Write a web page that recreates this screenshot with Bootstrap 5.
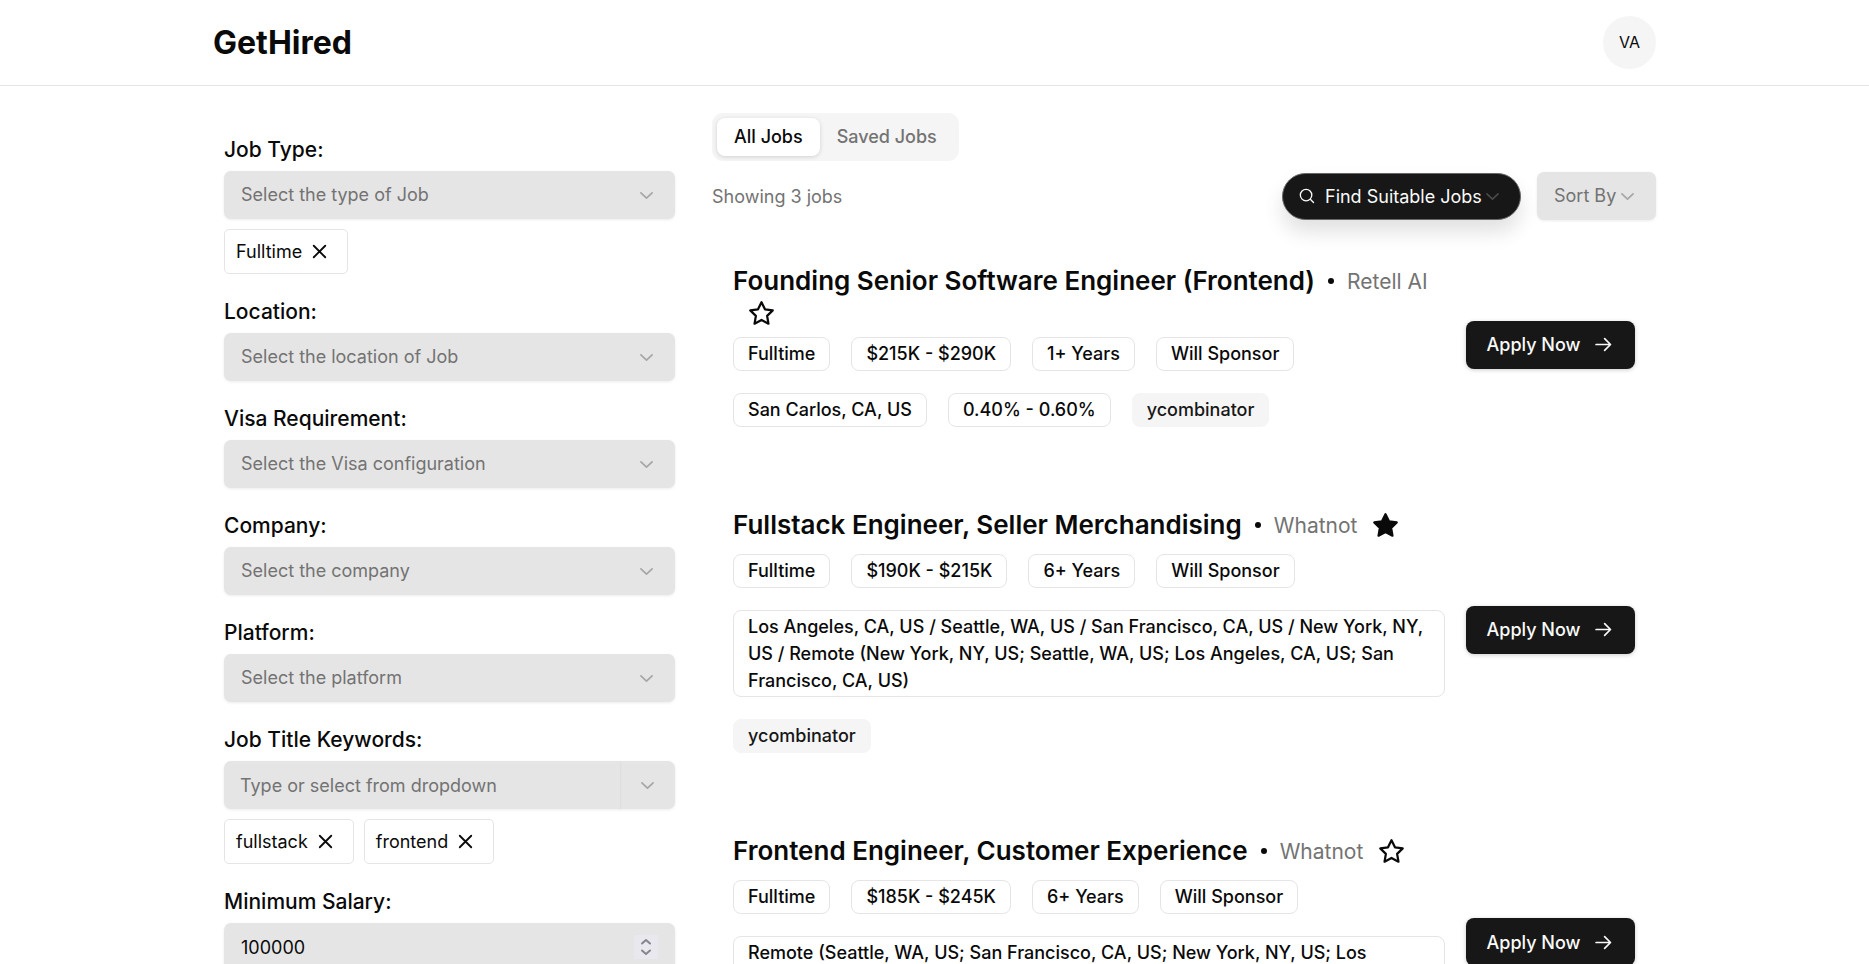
<!DOCTYPE html>
<html lang="en">
<head>
<meta charset="utf-8">
<meta name="viewport" content="width=device-width, initial-scale=1">
<title>GetHired</title>
<link href="https://cdn.jsdelivr.net/npm/bootstrap@5.3.0/dist/css/bootstrap.min.css" rel="stylesheet">
<style>
:root { --ink: #0a0a0a; --primary: #171717; --line: #e5e5e5; --soft: #f5f5f5; --dim: #737373; }
body { font-family: Inter, "Liberation Sans", sans-serif; font-size: 18px; line-height: 27px; color: var(--ink); background: #fff; }
.wrap { max-width: 1443px; }
.site-header { border-bottom: 1px solid var(--line); padding: 16px 0; }
.brand { font-size: 32px; line-height: 40px; font-weight: 700; color: var(--ink); text-decoration: none; }
.avatar { width: 53px; height: 53px; background: var(--soft); font-size: 16px; border: 0; color: var(--ink); }
.filters { flex: 0 0 451px; margin-left: 11px; padding-top: 50px; }
.results { margin-left: 37px; padding-top: 27px; }

/* filter form */
.field { margin-bottom: 24px; }
.field-label { display: block; font-size: 21px; line-height: 28px; font-weight: 500; margin-bottom: 7px; }
.control { height: 48px; border: 0; border-radius: 7px; background-color: var(--line); color: var(--dim); font-size: 18px; line-height: 24px; padding: 12px 17px; box-shadow: 0 1px 3px rgba(0,0,0,.08); }
.pick { background-image: url("data:image/svg+xml,%3Csvg xmlns='http://www.w3.org/2000/svg' viewBox='0 0 15 15'%3E%3Cpath d='M3.500 5.600L7.500 9.400L11.500 5.600' fill='none' stroke='%23a6a6a6' stroke-width='1.200' stroke-linecap='round' stroke-linejoin='round'/%3E%3C/svg%3E"); background-repeat: no-repeat; background-size: 21px 21px; background-position: right 18px center; }
.control:focus { background-color: var(--line); }
.control::placeholder { color: var(--dim); opacity: 1; }
.combo-text { padding-left: 16px; }
.combo-toggle { flex: 0 0 56px; border-left: 1px solid #dedede; background-position: 17px center; }
.salary { color: var(--ink); appearance: textfield; -moz-appearance: textfield; }
.salary::-webkit-inner-spin-button { appearance: none; -webkit-appearance: none; }
.stepper { right: 17px; top: 12px; width: 24px; height: 24px; background: #e8e8ee; border: 0; padding: 0; color: #85858f; }
.chips { gap: 10px; margin-top: 10px; }
.chip { height: 45px; border: 1px solid var(--line); border-radius: 5px; padding: 0 17px 0 11px; gap: 7px; }
.chip button { border: 0; background: none; padding: 0; color: inherit; }

/* tabs and toolbar */
.tabs { background: var(--soft); border-radius: 11px; padding: 5px; height: 48px; }
.tabs button { border: 0; background: none; border-radius: 8px; padding: 0 17px; font-weight: 500; color: var(--dim); height: 38px; line-height: 38px; }
.tabs button.active { background: #fff; color: var(--ink); box-shadow: 0 1px 4px rgba(0,0,0,.15); }
.toolbar { height: 48px; margin-top: 11px; gap: 16px; }
.job-count { color: var(--dim); }
.find { height: 47px; width: 239px; border-radius: 24px; background: var(--primary); color: #fafafa; border: 1px solid #666; padding: 0 15px 0 14px; box-shadow: 0 12px 20px rgba(0,0,0,.12); }
.sort { width: 119px; }

/* job list */
.jobs { padding: 42px 21px 0; }
.job { gap: 21px; margin-bottom: 79px; }
.job-title { font-size: 26px; line-height: 38px; font-weight: 600; margin: 0; }
.dot { width: 6px; height: 6px; border-radius: 50%; background: var(--ink); margin: 0 13px; }
.company { font-size: 21px; color: var(--dim); }
.star { height: 27px; width: 27px; margin-left: 15px; border: 0; padding: 0; background: none; color: var(--ink); }
.tags { gap: 22px 21px; margin-top: 10px; }
.tag { min-height: 34px; border: 1px solid var(--line); border-radius: 8px; padding: 2px 14px; font-weight: 500; font-size: 18px; line-height: 27px; }
.tag-source { background: var(--soft); border-color: var(--soft); color: var(--primary); }
.apply { flex: 0 0 169px; height: 48px; border-radius: 8px; background: var(--primary); color: #fafafa; font-weight: 500; text-decoration: none; gap: 13px; box-shadow: 0 1px 4px rgba(0,0,0,.2); }
svg { display: block; flex: none; }
</style>
</head>
<body>
<svg class="d-none" xmlns="http://www.w3.org/2000/svg">
  <symbol id="cross" viewBox="0 0 15 15"><path d="M3.400 3.400L11.600 11.600M11.600 3.400L3.400 11.600" fill="none" stroke="currentColor" stroke-width="1.300" stroke-linecap="round"/></symbol>
  <symbol id="arrow" viewBox="0 0 15 15"><path d="M2.200 7.500H12.300M8.300 3.300L12.500 7.500L8.300 11.700" fill="none" stroke="currentColor" stroke-width="1.200" stroke-linecap="round" stroke-linejoin="round"/></symbol>
  <symbol id="star" viewBox="0 0 24 24"><path d="M12 2L15.090 8.260L22 9.270L17 14.140L18.180 21.020L12 17.770L5.820 21.020L7 14.140L2 9.270L8.910 8.260Z" stroke="currentColor" stroke-width="2" stroke-linejoin="round"/></symbol>
</svg>

<header class="site-header">
  <div class="wrap mx-auto d-flex align-items-center justify-content-between">
    <a class="brand" href="#">GetHired</a>
    <button type="button" class="avatar rounded-circle">VA</button>
  </div>
</header>

<div class="wrap mx-auto d-flex align-items-start">
  <form class="filters">
    <div class="field">
      <label class="field-label" for="type">Job Type:</label>
      <select id="type" class="form-select control pick"><option>Select the type of Job</option></select>
      <div class="chips d-flex">
        <span class="chip d-inline-flex align-items-center">Fulltime <button type="button" aria-label="Remove Fulltime"><svg width="21" height="21"><use href="#cross"/></svg></button></span>
      </div>
    </div>
    <div class="field">
      <label class="field-label" for="location">Location:</label>
      <select id="location" class="form-select control pick"><option>Select the location of Job</option></select>
    </div>
    <div class="field">
      <label class="field-label" for="visa">Visa Requirement:</label>
      <select id="visa" class="form-select control pick"><option>Select the Visa configuration</option></select>
    </div>
    <div class="field">
      <label class="field-label" for="company">Company:</label>
      <select id="company" class="form-select control pick"><option>Select the company</option></select>
    </div>
    <div class="field">
      <label class="field-label" for="platform">Platform:</label>
      <select id="platform" class="form-select control pick"><option>Select the platform</option></select>
    </div>
    <div class="field">
      <label class="field-label" for="keywords">Job Title Keywords:</label>
      <div class="input-group flex-nowrap">
        <input id="keywords" type="text" class="form-control control combo-text" placeholder="Type or select from dropdown">
        <button type="button" class="control pick combo-toggle" aria-label="Show keywords"></button>
      </div>
      <div class="chips d-flex">
        <span class="chip d-inline-flex align-items-center">fullstack <button type="button" aria-label="Remove fullstack"><svg width="21" height="21"><use href="#cross"/></svg></button></span>
        <span class="chip d-inline-flex align-items-center">frontend <button type="button" aria-label="Remove frontend"><svg width="21" height="21"><use href="#cross"/></svg></button></span>
      </div>
    </div>
    <div class="field">
      <label class="field-label" for="salary">Minimum Salary:</label>
      <div class="position-relative">
        <input id="salary" type="number" class="form-control control salary" value="100000">
        <button type="button" class="stepper position-absolute" aria-label="Change salary"><svg width="24" height="24" viewBox="0 0 24 24" fill="none" stroke="currentColor" stroke-width="2" stroke-linecap="round" stroke-linejoin="round"><path d="M8 8.500L12 5L16 8.500M8 15.500L12 19L16 15.500"/></svg></button>
      </div>
    </div>
  </form>

  <main class="results flex-grow-1">
    <div class="tabs d-inline-flex align-top" role="tablist">
      <button type="button" role="tab" class="active" aria-selected="true">All Jobs</button>
      <button type="button" role="tab" aria-selected="false">Saved Jobs</button>
    </div>
    <div class="toolbar d-flex align-items-center">
      <span class="job-count me-auto text-nowrap">Showing 3 jobs</span>
      <button type="button" class="find d-flex align-items-center text-nowrap">
        <svg width="20" height="20" viewBox="0 0 15 15" fill="none" stroke="currentColor" stroke-width="1" stroke-linecap="round"><circle cx="6.800" cy="6.800" r="4.300"/><path d="M10 10L12.400 12.400"/></svg>
        <span class="ms-2">Find Suitable Jobs</span>
        <svg width="21" height="21" viewBox="0 0 15 15" fill="none" stroke="#4a4a4a" stroke-width="1.100" stroke-linecap="round" stroke-linejoin="round"><path d="M3.500 5.600L7.500 9.400L11.500 5.600"/></svg>
      </button>
      <select class="form-select control pick sort" aria-label="Sort By"><option>Sort By</option></select>
    </div>

    <div class="jobs">
      <article class="job d-flex align-items-center">
        <div class="flex-grow-1">
          <div class="d-flex flex-wrap align-items-center">
            <h2 class="job-title">Founding Senior Software Engineer (Frontend)</h2><span class="dot"></span><span class="company">Retell AI</span>
            <button type="button" class="star" aria-label="Save job"><svg width="27" height="27" fill="none"><use href="#star"/></svg></button>
          </div>
          <div class="tags d-flex flex-wrap">
            <span class="tag">Fulltime</span><span class="tag">$215K - $290K</span><span class="tag">1+ Years</span><span class="tag">Will Sponsor</span>
            <span class="tag">San Carlos, CA, US</span><span class="tag">0.40% - 0.60%</span><span class="tag tag-source">ycombinator</span>
          </div>
        </div>
        <a class="apply d-flex align-items-center justify-content-center" href="#">Apply Now <svg width="21" height="21"><use href="#arrow"/></svg></a>
      </article>

      <article class="job d-flex align-items-center">
        <div class="flex-grow-1">
          <div class="d-flex flex-wrap align-items-center">
            <h2 class="job-title">Fullstack Engineer, Seller Merchandising</h2><span class="dot"></span><span class="company">Whatnot</span>
            <button type="button" class="star" aria-label="Remove saved job"><svg width="27" height="27" fill="currentColor"><use href="#star"/></svg></button>
          </div>
          <div class="tags d-flex flex-wrap">
            <span class="tag">Fulltime</span><span class="tag">$190K - $215K</span><span class="tag">6+ Years</span><span class="tag">Will Sponsor</span>
            <span class="tag">Los Angeles, CA, US / Seattle, WA, US / San Francisco, CA, US / New York, NY, US / Remote (New York, NY, US; Seattle, WA, US; Los Angeles, CA, US; San Francisco, CA, US)</span><span class="tag tag-source">ycombinator</span>
          </div>
        </div>
        <a class="apply d-flex align-items-center justify-content-center" href="#">Apply Now <svg width="21" height="21"><use href="#arrow"/></svg></a>
      </article>

      <article class="job d-flex align-items-center">
        <div class="flex-grow-1">
          <div class="d-flex flex-wrap align-items-center">
            <h2 class="job-title">Frontend Engineer, Customer Experience</h2><span class="dot"></span><span class="company">Whatnot</span>
            <button type="button" class="star" aria-label="Save job"><svg width="27" height="27" fill="none"><use href="#star"/></svg></button>
          </div>
          <div class="tags d-flex flex-wrap">
            <span class="tag">Fulltime</span><span class="tag">$185K - $245K</span><span class="tag">6+ Years</span><span class="tag">Will Sponsor</span>
            <span class="tag">Remote (Seattle, WA, US; San Francisco, CA, US; New York, NY, US; Los Angeles, CA, US)</span><span class="tag tag-source">ycombinator</span>
          </div>
        </div>
        <a class="apply d-flex align-items-center justify-content-center" href="#">Apply Now <svg width="21" height="21"><use href="#arrow"/></svg></a>
      </article>
    </div>
  </main>
</div>
<script src="https://cdn.jsdelivr.net/npm/bootstrap@5.3.0/dist/js/bootstrap.bundle.min.js"></script>
</body>
</html>
